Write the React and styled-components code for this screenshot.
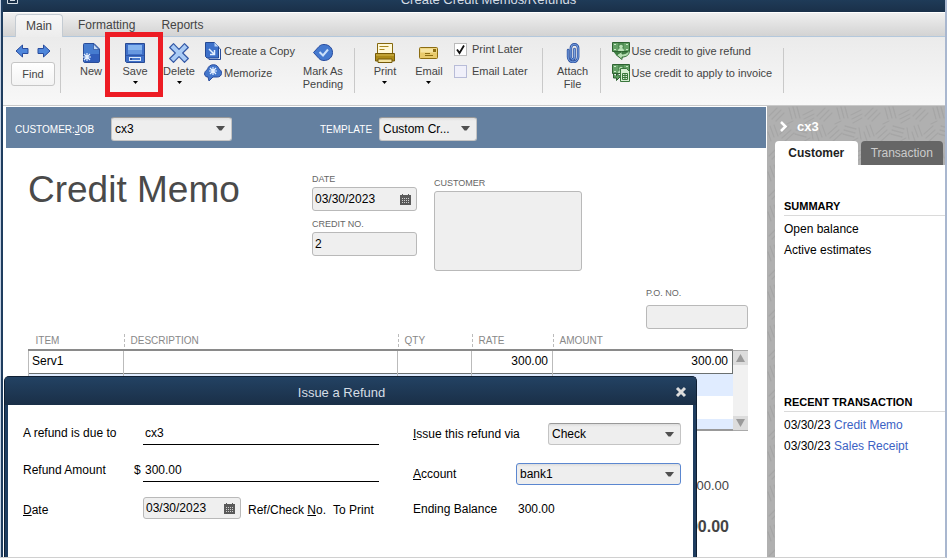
import React from 'react';
import styled, { createGlobalStyle, css } from 'styled-components';

const GlobalStyle = createGlobalStyle`
  * {
    box-sizing: border-box;
  }

  body {
    margin: 0;
    background: #FFF;
    font-family: "Liberation Sans", Arial, sans-serif;
    font-size: 12px;
    color: #000;
  }

  button, input, select, textarea {
    font: inherit;
    color: inherit;
    margin: 0;
    padding: 0;
    border: 0;
    border-radius: 0;
    background: none;
    outline: none;
  }

  h1, h2, h3, p, ul {
    margin: 0;
    padding: 0;
    font-weight: normal;
  }

  svg {
    display: block;
    flex: none;
  }
`;

const texture = encodeURIComponent(
  '<svg xmlns="http://www.w3.org/2000/svg" width="48" height="40"><g stroke="#a6a6a6" stroke-width="1.3" stroke-linecap="round">' +
  '<path d="M2 10l8-8M5 13l9-9M9 15l8-8M22 2l3 11M26 1l3 11M30 1l3 11M36 9l10-5M37 13l10-5M38 17l9-5M3 20l4 11M7 19l4 11M1 26l3 9M15 32l9-8M17 36l10-9M13 28l9-8M30 20l11 3M29 24l11 3M28 28l11 3M34 37l9-5M44 22l2 11M20 18l6-3"/></g></svg>'
);

const tick = encodeURIComponent(
  '<svg xmlns="http://www.w3.org/2000/svg" width="11" height="11"><path d="M2 5.5L4.5 9L9 1.5" fill="none" stroke="#111" stroke-width="1.8"/></svg>'
);

const Window = styled.div`
  position: relative;
  display: flex;
  flex-direction: column;
  height: 100vh;
  min-height: 540px;
  overflow: hidden;
  background: #FFF;
  border-left: 1px solid #C5D2E4;
  border-right: 2px solid #A9B7CF;
  border-bottom: 1px solid #D0D0D0;
`;

const Frame = styled.div`
  display: flex;
  flex-direction: column;
  flex: 1;
  min-height: 0;
  border-left: 2px solid #1F3D5F;
`;

const TitleBar = styled.header`
  display: flex;
  align-items: flex-end;
  height: 12px;
  padding: 0 0 4px 4px;
  overflow: hidden;
  background: linear-gradient(#1F3B58, #1A3049);
`;

const WindowTitle = styled.h1`
  flex: 1;
  padding-left: 14px;
  text-align: center;
  font-size: 13px;
  line-height: 16px;
  color: #D5DDE5;
`;

const TabBar = styled.nav`
  display: flex;
  height: 25px;
  padding: 1px 0 0 12px;
  border-top: 1px solid #FFF;
  border-bottom: 1px solid #B4C8DC;
  background: linear-gradient(#EFEFEF, #D3D3D3);
`;

const RibbonTab = styled.button`
  height: 23px;
  padding: 0 11px;
  margin-right: 4px;
  line-height: 23px;
  color: #444;

  ${({ $active }) => $active && css`
    padding: 0 10px;
    height: 24px;
    border: 1px solid #C4CBD2;
    border-bottom: 0;
    border-radius: 4px 4px 0 0;
    background: linear-gradient(#F7F7F7, #ECECEC);
  `}
`;

const Toolbar = styled.div`
  display: flex;
  height: 69px;
  padding-left: 8px;
  border-bottom: 1px solid #C9C9C9;
  background: linear-gradient(#EBEBEB, #F8F8F8);
  font-size: 11px;
  color: #444;
`;

const Separator = styled.div`
  width: 1px;
  height: 45px;
  margin: 11px 8px 0 ${({ $before }) => $before}px;
  background: #C9C9C9;
`;

const FindGroup = styled.div`
  width: 44px;
  padding-top: 7px;
`;

const Arrows = styled.div`
  display: flex;
  justify-content: space-between;
  padding: 0 4px;
  margin-bottom: 4px;
`;

const FindButton = styled.button`
  width: 44px;
  height: 24px;
  border: 1px solid #C6C6C6;
  border-radius: 3px;
  background: linear-gradient(#FFF, #F3F3F3);
`;

const ToolButton = styled.button`
  position: relative;
  display: flex;
  flex-direction: column;
  align-items: center;
  width: ${({ $wide }) => ($wide ? 56 : 44)}px;
  padding-top: 6px;
  line-height: 13px;

  span {
    margin: 2px 0 3px;
  }
`;

const Highlight = styled.div`
  position: absolute;
  top: -5px;
  left: -8px;
  width: 58px;
  height: 65px;
  border: 5px solid #ED1C24;
  pointer-events: none;
`;

const ToolList = styled.div`
  display: flex;
  flex-direction: column;
  gap: 4px;
  padding-top: 5px;
  margin-left: 3px;
  white-space: nowrap;
`;

const ListButton = styled.button`
  display: flex;
  align-items: center;
  gap: 2px;
  height: 18px;
`;

const CheckLabel = styled.label`
  display: flex;
  align-items: center;
  gap: 5px;
  height: 18px;
  padding-bottom: 4px;

  input {
    appearance: none;
    width: 13px;
    height: 13px;
    border: 1px solid #B8BCD8;
    background: #F0F0FA;
  }

  input:checked {
    border-color: #BBB;
    background: #FFF url("data:image/svg+xml;charset=UTF-8,${tick}") no-repeat center;
  }
`;

const Body = styled.div`
  display: flex;
  flex: 1;
  min-height: 0;
`;

const Main = styled.main`
  position: relative;
  flex: 1;
  min-width: 0;
`;

const Banner = styled.div`
  display: flex;
  align-items: center;
  height: 41px;
  margin: 1px 1px 0 3px;
  padding: 3px 0 0 9px;
  background: #6480A0;
`;

const BannerLabel = styled.label`
  width: ${({ $width }) => $width}px;
  margin-left: ${({ $before }) => $before || 0}px;
  font-size: 10px;
  color: #FFF;
`;

const SelectBox = styled.div`
  display: grid;
  width: ${({ $width }) => $width}px;
  height: ${({ $height }) => $height || 22}px;

  select, svg {
    grid-area: 1 / 1;
  }

  select {
    appearance: none;
    width: 100%;
    padding: 0 20px 0 3px;
    border: 1px solid ${({ $focused }) => ($focused ? '#5B87D0' : '#C4C4C4')};
    border-top-color: ${({ $focused }) => ($focused ? '#5B87D0' : '#999')};
    border-radius: 3px;
    background: linear-gradient(#DDD, #EEE 3px);
  }

  svg {
    place-self: center end;
    margin-right: 7px;
    pointer-events: none;
  }
`;

const BannerSelect = styled(SelectBox)`
  margin-bottom: 1px;
`;

const FormHead = styled.div`
  display: flex;
  padding: 25px 19px 0 25px;
`;

const FormTitle = styled.h2`
  width: 284px;
  margin-top: -4px;
  font-size: 37px;
  line-height: 42px;
  color: #4A4A4A;
`;

const FieldStack = styled.div`
  display: flex;
  flex-direction: column;
  gap: 7px;
  width: 105px;
  margin-right: 17px;
`;

const Field = styled.div`
  display: flex;
  flex-direction: column;
  gap: ${({ $gap }) => $gap || 2}px;

  label {
    font-size: 9px;
    line-height: 12px;
    color: #666;
  }
`;

const CustomerField = styled(Field)`
  width: 148px;
  margin-top: 4px;
`;

const PoField = styled(Field)`
  width: 102px;
  margin: 16px 19px 0 auto;
`;

const boxed = css`
  border: 1px solid #B9B9B9;
  border-radius: 3px;
  background: #EFEFEF;
`;

const TextInput = styled.input`
  ${boxed}
  width: 100%;
  height: 24px;
  padding: 0 2px;
`;

const AddressBox = styled.textarea`
  ${boxed}
  display: block;
  width: 100%;
  height: 80px;
  resize: none;
`;

const DateBox = styled.div`
  ${boxed}
  display: flex;
  align-items: center;
  height: ${({ $height }) => $height || 24}px;
  width: ${({ $width }) => ($width ? `${$width}px` : '100%')};
  padding: 0 5px 0 2px;

  input {
    flex: 1;
    min-width: 0;
  }
`;

const TableArea = styled.div`
  display: flex;
  height: 99px;
  margin: 3px 19px 0 25px;
`;

const TableClip = styled.div`
  flex: 1;
  overflow: hidden;
  border-bottom: 2px solid #999;
`;

const ItemTable = styled.table`
  width: 100%;
  table-layout: fixed;
  border-collapse: collapse;

  th {
    height: 18px;
    padding: 0 0 0 7px;
    text-align: left;
    font-size: 10px;
    font-weight: normal;
    color: #888;
    background: linear-gradient(#BBB 60%, transparent 60%) 0 2px / 1px 5px repeat-y;
  }

  th:first-child {
    background: none;
  }

  td {
    height: 23px;
    padding: 0 4px 2px 3px;
    border-left: 1px solid #BBB;
  }

  tbody tr:nth-child(even) {
    background: #E0ECFF;
  }

  tbody tr:first-child {
    border: 1px solid #6B7070;
    border-top: 2px solid #8A8A8A;
  }
`;

const NumberCell = styled.td`
  text-align: right;
`;

const Scrollbar = styled.div`
  display: flex;
  flex-direction: column;
  justify-content: space-between;
  width: 15px;
  margin-top: 18px;
  border-top: 1px solid #AAA;
  border-bottom: 1px solid #AAA;
  background: #F1F1F1;

  button {
    display: grid;
    place-items: center;
    height: 14px;
    background: #DCDCDC;
  }
`;

const Totals = styled.div`
  display: flex;
  flex-direction: column;
  align-items: flex-end;
  gap: 21px;
  padding: 45px 38px 0 0;
  line-height: 20px;
  font-size: 13px;
  color: #444;

  strong {
    font-size: 16px;
  }
`;

const Side = styled.aside`
  display: flex;
  flex-direction: column;
  width: 178px;
  padding-left: 8px;
  background: #B0B0B0 url("data:image/svg+xml;charset=UTF-8,${texture}");
`;

const SideHead = styled.div`
  display: flex;
  align-items: center;
  gap: 9px;
  height: 35px;
  padding: 5px 0 0 4px;
  font-size: 13px;
  font-weight: bold;
  color: #FFF;
`;

const SideTabs = styled.div`
  display: flex;
  gap: 3px;
  padding-right: 2px;
`;

const SideTab = styled.button`
  flex: 1;
  height: 24px;
  border-radius: 4px 4px 0 0;
  background: ${({ $active }) => ($active ? '#FFF' : '#666')};
  color: ${({ $active }) => ($active ? '#222' : '#CCC')};
  font-weight: ${({ $active }) => ($active ? 'bold' : 'normal')};
`;

const SideContent = styled.div`
  display: flex;
  flex-direction: column;
  gap: 132px;
  flex: 1;
  padding: 32px 0 0 9px;
  background: #FFF;
`;

const SectionTitle = styled.h3`
  margin-bottom: 3px;
  border-bottom: 1px solid #DADADA;
  font-size: 11px;
  font-weight: bold;
  line-height: 18px;
`;

const SectionList = styled.ul`
  list-style: none;
  line-height: 21px;

  a {
    color: #3B62C4;
    text-decoration: none;
  }
`;

const Dialog = styled.section`
  position: absolute;
  top: 270px;
  right: 70px;
  bottom: 0;
  left: 1px;
  border: 1px solid #0F1F33;
  border-bottom: 0;
  border-radius: 5px 5px 0 0;
  background: #1F3D5F;
  padding: 0 3px;
`;

const DialogHead = styled.div`
  display: flex;
  align-items: center;
  height: 28px;
  margin: 0 -3px;
  padding: 2px 9px 0 0;
  border-radius: 4px 4px 0 0;
  background: linear-gradient(#234263, #1A2F47);

  h2 {
    flex: 1;
    padding-left: 3px;
    text-align: center;
    font-size: 13px;
    color: #D5DDE5;
  }
`;

const DialogBody = styled.form`
  display: grid;
  grid-template-columns: 356fr 268fr;
  gap: 34px;
  height: calc(100% - 28px);
  padding: 16px 12px 0 15px;
  background: #FFF;
  white-space: nowrap;
`;

const LeftColumn = styled.div`
  display: flex;
  flex-direction: column;
  gap: 13px;
`;

const RightColumn = styled.div`
  display: flex;
  flex-direction: column;
  gap: 18px;
  padding-top: 2px;
`;

const LeftRow = styled.div`
  display: flex;
  align-items: ${({ $align }) => $align || 'center'};
  height: 24px;
  line-height: 18px;

  > label:first-child {
    width: 111px;
  }
`;

const RightRow = styled.div`
  display: flex;
  align-items: center;
  justify-content: space-between;
  height: ${({ $short }) => ($short ? 12 : 22)}px;
`;

const Currency = styled.span`
  width: 9px;
`;

const LineInput = styled.input`
  flex: 1;
  min-width: 0;
  height: 24px;
  padding: 0 2px;
  border-bottom: 1px solid #000;
`;

const RefText = styled.span`
  margin-left: 7px;
`;

const Balance = styled.output`
  width: 165px;
  padding-left: 2px;
`;

const ResizeGrip = styled.div`
  position: absolute;
  top: 334px;
  right: -5px;
  width: 5px;
  height: 5px;
  border: 1px solid #444;
  background: #FFF;
`;

const Caret = () => (
  <svg width="5" height="3" viewBox="0 0 5 3"><path d="M0 0h5L2.5 3z" fill="#000" /></svg>
);

const DropArrow = () => (
  <svg width="9" height="5" viewBox="0 0 9 5"><path d="M0 0h9L5.5 4.5h-2z" fill="#505050" /></svg>
);

const ArrowIcon = ({ flip }) => (
  <svg width="14" height="14" viewBox="0 0 14 14">
    <path d="M1 7l6.500-6v3.500H13v5H7.500V13z" transform={flip ? 'rotate(180 7 7)' : undefined} fill="#4E86DA" stroke="#294C9E" strokeLinejoin="round" />
  </svg>
);

const Burst = ({ x, y, color = '#E4F0FF' }) => (
  <path d="M0-4v8M-4 0h8M-3-3l6 6M3-3l-6 6" transform={`translate(${x} ${y})`} stroke={color} strokeWidth="1.2" />
);

const NewIcon = () => (
  <svg width="20" height="20" viewBox="0 0 20 20">
    <path d="M2.5 1.5a1 1 0 0 1 1-1H13l5.5 5.5v12a1.5 1.5 0 0 1-1.5 1.5H4A1.5 1.5 0 0 1 2.5 18z" fill="#467CCF" stroke="#2A4D99" />
    <path d="M3 11h15v8H4z" fill="#315EBB" />
    <path d="M12.5 1v5.5H18z" fill="#C5DCF8" stroke="#2A4D99" strokeWidth=".7" />
    <Burst x={6} y={14} />
  </svg>
);

const SaveIcon = () => (
  <svg width="20" height="20" viewBox="0 0 20 20">
    <path d="M.5.5h19v19h-18l-1-1z" fill="#3E6FC8" stroke="#284A93" />
    <path d="M3 2h14v5H3z" fill="#86B5EF" />
    <path d="M3 7h14v4H3z" fill="#6798E0" />
    <path d="M1 12.5h18" stroke="#2E56A8" />
    <path d="M4 14h12v4H4z" fill="#DCEAFB" />
    <path d="M7 15h8v2H7z" fill="#4A7ACB" />
    <path d="M5 15h2v2H5z" fill="#2A4D99" />
  </svg>
);

const DeleteIcon = () => (
  <svg width="20" height="20" viewBox="0 0 20 20">
    <path d="M4.5.7L10 6.300 15.500.7l3.800 3.800L13.700 10l5.600 5.500-3.800 3.800-5.500-5.600-5.500 5.600-3.800-3.800L6.300 10 .7 4.500z" fill="#A9CBF5" stroke="#3458A5" strokeWidth="1.2" strokeLinejoin="round" />
  </svg>
);

const CopyIcon = () => (
  <svg width="18" height="18" viewBox="0 0 18 18">
    <path d="M4 4h9l3.5 3v10.500H5z" fill="#E7F0FD" stroke="#2A4D99" />
    <path d="M1.500.5h9l4 4V16H3l-1.500-1.500z" fill="#3D71CA" stroke="#244993" />
    <path d="M10.500.5v4h4z" fill="#BBD5F8" />
    <path d="M5 7l5.500 5.500M6 12.500h4.500V8" fill="none" stroke="#E4F0FF" strokeWidth="1.5" />
  </svg>
);

const MemorizeIcon = () => (
  <svg width="18" height="18" viewBox="0 0 18 18">
    <path d="M4 13C1 13 0 10.500.8 8.500 1.300 7 2.500 6 3.500 5.500 4 2.500 6.500.7 9.500.7c3 0 5 2 5.500 4.300 1.800.8 2.700 2.500 2.500 4.500-.3 2.300-2 3.500-4 3.500H9l-4 4z" fill="#4477CC" stroke="#294C9E" />
    <Burst x={9} y={7} />
  </svg>
);

const PendingIcon = () => (
  <svg width="20" height="20" viewBox="0 0 20 20">
    <path d="M.5 9.500L6 3.500C7.500 2 9 1.500 11 1.500c5 0 8.500 3.500 8.500 8s-3.500 8-8.500 8c-2 0-3.500-.5-5-2z" fill="#4579CF" stroke="#294C9E" />
    <path d="M6.500 9l3.500 3.500L15 6.500" fill="none" stroke="#CBE0FA" strokeWidth="2" />
  </svg>
);

const PrintIcon = () => (
  <svg width="20" height="20" viewBox="0 0 20 20">
    <path d="M2.500.5h15v11h-15z" fill="#FFF9D8" stroke="#85680E" />
    <path d="M4.500 3.500h9M4.500 6.500h5" stroke="#A98820" />
    <path d="M.5 10.500h19V18H.5z" fill="#AB8A18" stroke="#755A09" />
    <path d="M1 12h18" stroke="#D5B951" />
    <path d="M3 16h14v3.500H3z" fill="#F3E3A0" stroke="#755A09" />
  </svg>
);

const EmailIcon = () => (
  <svg width="20" height="20" viewBox="0 0 20 20">
    <rect x=".5" y="4.5" width="18" height="11" rx="1" fill="#E8CA6B" stroke="#8C6D12" />
    <path d="M1.500 5.500h16v4h-16z" fill="#F6E4A2" />
    <path d="M14 6h3v3h-3z" fill="#8C6D12" />
    <path d="M6 10.500h5M6 12.500h8" stroke="#8C6D12" />
  </svg>
);

const clipPath = 'M11.500 6v8.500a1.800 1.800 0 0 1-3.600 0V5a3.600 3.600 0 0 1 7.200 0v9a5 5 0 0 1-10 0V7';

const ClipIcon = () => (
  <svg width="20" height="20" viewBox="0 0 20 20" fill="none" strokeLinecap="round">
    <path d={clipPath} stroke="#2C519F" strokeWidth="2.6" />
    <path d={clipPath} stroke="#87B1EE" strokeWidth=".9" />
  </svg>
);

const Banknote = () => (
  <g>
    <path d="M.5.5h17v9H.5z" fill="#64A166" stroke="#2E6332" />
    <path d="M6 1h6v8H6z" fill="#4E8C52" />
    <path d="M6 9c0-2 1-3 3-3s3 1 3 3z" fill="#B9E0B6" />
    <circle cx="9" cy="4.500" r="1.800" fill="#B9E0B6" />
    <path d="M2 2h2v1H2zM14 2h2v1h-2zM2 7h2v1H2zM14 7h2v1h-2z" fill="#C9EAC7" />
  </g>
);

const RefundIcon = () => (
  <svg width="18" height="18" viewBox="0 0 18 18">
    <path d="M1 9h16l-4 5-4 3-5-4z" fill="#3F7F43" />
    <Banknote />
    <path d="M17.300 8c.5 5-2.800 7-7.300 7v2.500L4.500 13 10 9.500V12c3 0 6-1.500 7.300-4z" fill="#B6DEB3" stroke="#39733C" strokeLinejoin="round" />
  </svg>
);

const InvoiceIcon = () => (
  <svg width="18" height="18" viewBox="0 0 18 18">
    <Banknote />
    <path d="M1.500 10v4h3v2.500l4-4-4-3V12" fill="#5C9D60" stroke="#2E6332" />
    <path d="M8.500 4.500h6l3 3v10h-9z" fill="#D6EDD3" stroke="#3A773D" />
    <path d="M10.500 9.500h5v6h-5zM10.500 11.500h5M10.500 13.500h5M13 9.500v6" fill="none" stroke="#3A773D" />
  </svg>
);

const CalendarIcon = () => (
  <svg width="11" height="11" viewBox="0 0 11 11">
    <path d="M0 1h2V0h1v1h5V0h1v1h2v10H0z" fill="#5A5A5A" />
    <path d="M2 4.500h8M2 6.500h8M2 8.500h8" stroke="#CFCFCF" strokeDasharray="1 1" />
  </svg>
);

const ChoiceBox = ({ as: Box = SelectBox, id, value, width, height, focused }) => (
  <Box $width={width} $height={height} $focused={focused}>
    <select id={id} defaultValue={value}>
      <option>{value}</option>
    </select>
    <DropArrow />
  </Box>
);

const DateInput = ({ id, width, height }) => (
  <DateBox $width={width} $height={height}>
    <input id={id} type="text" defaultValue="03/30/2023" />
    <button type="button" aria-label="Pick a date"><CalendarIcon /></button>
  </DateBox>
);

const Ribbon = () => (
  <Toolbar>
    <FindGroup>
      <Arrows>
        <button type="button" aria-label="Previous"><ArrowIcon /></button>
        <button type="button" aria-label="Next"><ArrowIcon flip /></button>
      </Arrows>
      <FindButton>Find</FindButton>
    </FindGroup>
    <Separator $before={5} />
    <ToolButton><NewIcon /><span>New</span></ToolButton>
    <ToolButton><SaveIcon /><span>Save</span><Caret /><Highlight /></ToolButton>
    <ToolButton><DeleteIcon /><span>Delete</span><Caret /></ToolButton>
    <ToolList>
      <ListButton><CopyIcon />Create a Copy</ListButton>
      <ListButton><MemorizeIcon />Memorize</ListButton>
    </ToolList>
    <ToolButton $wide><PendingIcon /><span>Mark As<br />Pending</span></ToolButton>
    <Separator $before={3} />
    <ToolButton><PrintIcon /><span>Print</span><Caret /></ToolButton>
    <ToolButton><EmailIcon /><span>Email</span><Caret /></ToolButton>
    <ToolList>
      <CheckLabel><input type="checkbox" defaultChecked />Print Later</CheckLabel>
      <CheckLabel><input type="checkbox" />Email Later</CheckLabel>
    </ToolList>
    <Separator $before={14} />
    <ToolButton><ClipIcon /><span>Attach<br />File</span></ToolButton>
    <Separator $before={5} />
    <ToolList>
      <ListButton><RefundIcon />Use credit to give refund</ListButton>
      <ListButton><InvoiceIcon />Use credit to apply to invoice</ListButton>
    </ToolList>
    <Separator $before={11} />
  </Toolbar>
);

const Items = () => (
  <TableArea>
    <TableClip>
      <ItemTable>
        <colgroup>
          <col width="95" />
          <col />
          <col width="74" />
          <col width="81" />
          <col width="180" />
        </colgroup>
        <thead>
          <tr>
            {['ITEM', 'DESCRIPTION', 'QTY', 'RATE', 'AMOUNT'].map(name => <th key={name}>{name}</th>)}
          </tr>
        </thead>
        <tbody>
          <tr>
            <td>Serv1</td>
            <td></td>
            <td></td>
            <NumberCell>300.00</NumberCell>
            <NumberCell>300.00</NumberCell>
          </tr>
          {[1, 2, 3].map(row => (
            <tr key={row}><td></td><td></td><td></td><td></td><td></td></tr>
          ))}
        </tbody>
      </ItemTable>
    </TableClip>
    <Scrollbar>
      <button type="button" aria-label="Scroll up">
        <svg width="9" height="8" viewBox="0 0 9 8"><path d="M0 8h9L4.500 0z" fill="#9A9A9A" /></svg>
      </button>
      <button type="button" aria-label="Scroll down">
        <svg width="9" height="8" viewBox="0 0 9 8"><path d="M0 0h9L4.500 8z" fill="#9A9A9A" /></svg>
      </button>
    </Scrollbar>
  </TableArea>
);

const RefundDialog = () => (
  <Dialog role="dialog" aria-labelledby="refund-title">
    <DialogHead>
      <h2 id="refund-title">Issue a Refund</h2>
      <button type="button" aria-label="Close">
        <svg width="12" height="12" viewBox="0 0 12 12"><path d="M2 2l8 8M10 2l-8 8" stroke="#DDD" strokeWidth="3" /></svg>
      </button>
    </DialogHead>
    <DialogBody>
      <LeftColumn>
        <LeftRow>
          <label htmlFor="due-to">A refund is due to</label>
          <Currency />
          <LineInput id="due-to" type="text" defaultValue="cx3" />
        </LeftRow>
        <LeftRow>
          <label htmlFor="refund-amount">Refund Amount</label>
          <Currency>$</Currency>
          <LineInput id="refund-amount" type="text" defaultValue="300.00" />
        </LeftRow>
        <LeftRow $align="flex-end">
          <label htmlFor="refund-date"><u>D</u>ate</label>
          <Currency />
          <DateInput id="refund-date" width={98} height={22} />
          <RefText>Ref/Check <u>N</u>o.</RefText>
          <RefText>To Print</RefText>
        </LeftRow>
      </LeftColumn>
      <RightColumn>
        <RightRow>
          <label htmlFor="refund-via"><u>I</u>ssue this refund via</label>
          <ChoiceBox id="refund-via" value="Check" width={133} />
        </RightRow>
        <RightRow>
          <label htmlFor="account"><u>A</u>ccount</label>
          <ChoiceBox id="account" value="bank1" width={165} focused />
        </RightRow>
        <RightRow $short>
          <label htmlFor="balance">Ending Balance</label>
          <Balance id="balance">300.00</Balance>
        </RightRow>
      </RightColumn>
    </DialogBody>
  </Dialog>
);

const CustomerPanel = () => (
  <Side>
    <SideHead>
      <svg width="9" height="11" viewBox="0 0 9 11"><path d="M2 1l4.500 4.500L2 10" fill="none" stroke="#FFF" strokeWidth="2.5" /></svg>
      cx3
    </SideHead>
    <SideTabs>
      <SideTab $active>Customer</SideTab>
      <SideTab>Transaction</SideTab>
    </SideTabs>
    <SideContent>
      <section>
        <SectionTitle>SUMMARY</SectionTitle>
        <SectionList>
          <li>Open balance</li>
          <li>Active estimates</li>
        </SectionList>
      </section>
      <section>
        <SectionTitle>RECENT TRANSACTION</SectionTitle>
        <SectionList>
          <li>03/30/23 <a href="#credit-memo">Credit Memo</a></li>
          <li>03/30/23 <a href="#sales-receipt">Sales Receipt</a></li>
        </SectionList>
      </section>
    </SideContent>
  </Side>
);

const App = () => (
  <Window>
    <GlobalStyle />
    <Frame>
      <TitleBar>
        <svg width="11" height="11" viewBox="0 0 11 11"><path d="M.5-1v7.500h10V-1" fill="#1A3049" stroke="#D5DDE5" /><path d="M3 3.500h5" stroke="#D5DDE5" /></svg>
        <WindowTitle>Create Credit Memos/Refunds</WindowTitle>
      </TitleBar>
      <TabBar>
        <RibbonTab $active>Main</RibbonTab>
        <RibbonTab>Formatting</RibbonTab>
        <RibbonTab>Reports</RibbonTab>
      </TabBar>
      <Ribbon />
      <Body>
        <Main>
          <Banner>
            <BannerLabel htmlFor="customer-job" $width={96}>CUSTOMER:<u>J</u>OB</BannerLabel>
            <ChoiceBox as={BannerSelect} id="customer-job" value="cx3" width={121} height={24} />
            <BannerLabel htmlFor="template" $width={59} $before={88}>TEMPLATE</BannerLabel>
            <ChoiceBox as={BannerSelect} id="template" value="Custom Cr..." width={98} height={24} />
          </Banner>
          <FormHead>
            <FormTitle>Credit Memo</FormTitle>
            <FieldStack>
              <Field>
                <label htmlFor="memo-date">DATE</label>
                <DateInput id="memo-date" />
              </Field>
              <Field>
                <label htmlFor="credit-no">CREDIT NO.</label>
                <TextInput id="credit-no" type="text" defaultValue="2" />
              </Field>
            </FieldStack>
            <CustomerField>
              <label htmlFor="customer">CUSTOMER</label>
              <AddressBox id="customer" />
            </CustomerField>
          </FormHead>
          <PoField $gap={6}>
            <label htmlFor="po-no">P.O. NO.</label>
            <TextInput id="po-no" type="text" />
          </PoField>
          <Items />
          <Totals>
            <span>300.00</span>
            <strong>300.00</strong>
          </Totals>
          <RefundDialog />
        </Main>
        <CustomerPanel />
      </Body>
    </Frame>
    <ResizeGrip />
  </Window>
);

export default App;
